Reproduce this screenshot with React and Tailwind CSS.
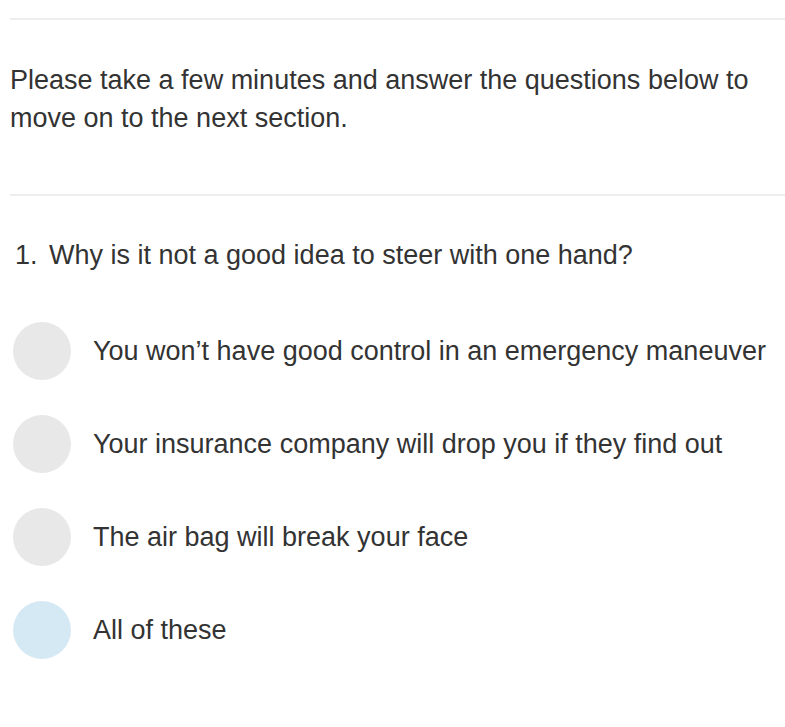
const options = [
    { label: "You won’t have good control in an emergency maneuver", selected: false },
    { label: "Your insurance company will drop you if they find out", selected: false },
    { label: "The air bag will break your face", selected: false },
    { label: "All of these", selected: true },
]

const App = () => {
    return (
        <div className="min-h-[727px] bg-white pl-[10px] pt-[18px] text-[#333333] font-['Liberation_Sans',Arial,sans-serif]">
            <div className="h-[2px] bg-[#eeeeee]" />

            {/* Intro */}
            <p className="pt-[41px] pr-4 text-[27px] leading-[38px]">
                Please take a few minutes and answer the questions below to move on to the next section.
            </p>

            <div className="mt-[57px] h-[2px] bg-[#eeeeee]" />

            {/* Question */}
            <div className="mt-[40px] flex text-[27px] leading-[38px]">
                <span className="w-[39px] pl-[5px]">1.</span>
                <span>Why is it not a good idea to steer with one hand?</span>
            </div>

            <div className="mt-[48px] flex flex-col gap-[35px]">
                {options.map((opt) => (
                    <div key={opt.label} className="flex items-center">
                        <div className={`ml-[3px] h-[58px] w-[58px] shrink-0 rounded-full ${opt.selected ? 'bg-[#d5e9f5]' : 'bg-[#e8e8e8]'}`} />
                        <span className="ml-[22px] text-[27px] leading-[38px]">{opt.label}</span>
                    </div>
                ))}
            </div>
        </div>
    )
}

export default App;
